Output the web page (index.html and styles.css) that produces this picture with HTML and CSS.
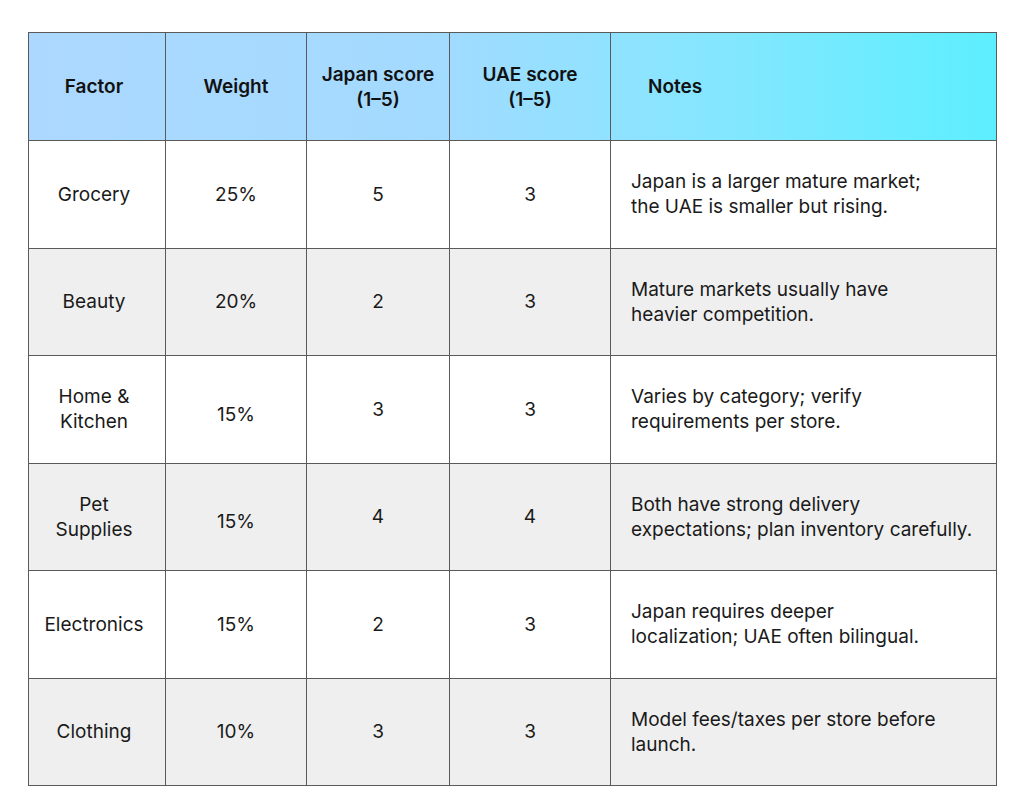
FILE: index.html
```html
<!DOCTYPE html>
<html>
<head>
<meta charset="utf-8">
<link rel="stylesheet" href="styles.css">
</head>
<body>
<table class="grid">
  <colgroup>
    <col class="c1"><col class="c2"><col class="c3"><col class="c4"><col class="c5">
  </colgroup>
  <thead>
    <tr>
      <th class="first">Factor</th>
      <th>Weight</th>
      <th>Japan score<br>(1–5)</th>
      <th>UAE score<br>(1–5)</th>
      <th class="notes-h">Notes</th>
    </tr>
  </thead>
  <tbody>
    <tr><td class="first">Grocery</td><td>25%</td><td>5</td><td>3</td><td class="notes">Japan is a larger mature market;<br>the UAE is smaller but rising.</td></tr>
    <tr class="alt"><td class="first">Beauty</td><td>20%</td><td>2</td><td>3</td><td class="notes">Mature markets usually have<br>heavier competition.</td></tr>
    <tr><td class="first">Home &amp;<br>Kitchen</td><td class="low">15%</td><td>3</td><td>3</td><td class="notes">Varies by category; verify<br>requirements per store.</td></tr>
    <tr class="alt"><td class="first">Pet<br>Supplies</td><td class="low">15%</td><td>4</td><td>4</td><td class="notes">Both have strong delivery<br>expectations; plan inventory carefully.</td></tr>
    <tr><td class="first">Electronics</td><td>15%</td><td>2</td><td>3</td><td class="notes">Japan requires deeper<br>localization; UAE often bilingual.</td></tr>
    <tr class="alt"><td class="first">Clothing</td><td>10%</td><td>3</td><td>3</td><td class="notes">Model fees/taxes per store before<br>launch.</td></tr>
  </tbody>
</table>
</body>
</html>
```
FILE: styles.css
```css
html, body {
  margin: 0;
  padding: 0;
  background: #ffffff;
}
body {
  padding: 32px 0 0 28px;
  font-family: Inter, "Noto Sans", sans-serif;
  color: #1a1a1a;
}
.grid {
  border-collapse: collapse;
  width: 968px;
  table-layout: fixed;
}
.c1 { width: 137px; }
.c2 { width: 141px; }
.c3 { width: 143px; }
.c4 { width: 161px; }
.c5 { width: 386px; }
.grid th, .grid td {
  border: 1px solid #5a5a5a;
  text-align: center;
  vertical-align: middle;
  font-size: 19px;
  line-height: 25px;
  padding: 0;
}
.grid thead tr {
  height: 108px;
  background: linear-gradient(90deg, #acd8ff 0%, #a4daff 40%, #86e6ff 70%, #5cefff 100%);
}
.grid th {
  font-weight: 600;
  color: #111;
}
.grid .first {
  padding-right: 6px;
}
.grid th.notes-h {
  text-align: left;
  padding-left: 37px;
}
.grid tbody tr {
  height: 107.5px;
  background: #ffffff;
}
.grid tbody tr.alt {
  background: #efefef;
}
.grid td.notes {
  text-align: left;
  padding-left: 20px;
}
.grid td.low {
  padding-top: 10px;
}
```
